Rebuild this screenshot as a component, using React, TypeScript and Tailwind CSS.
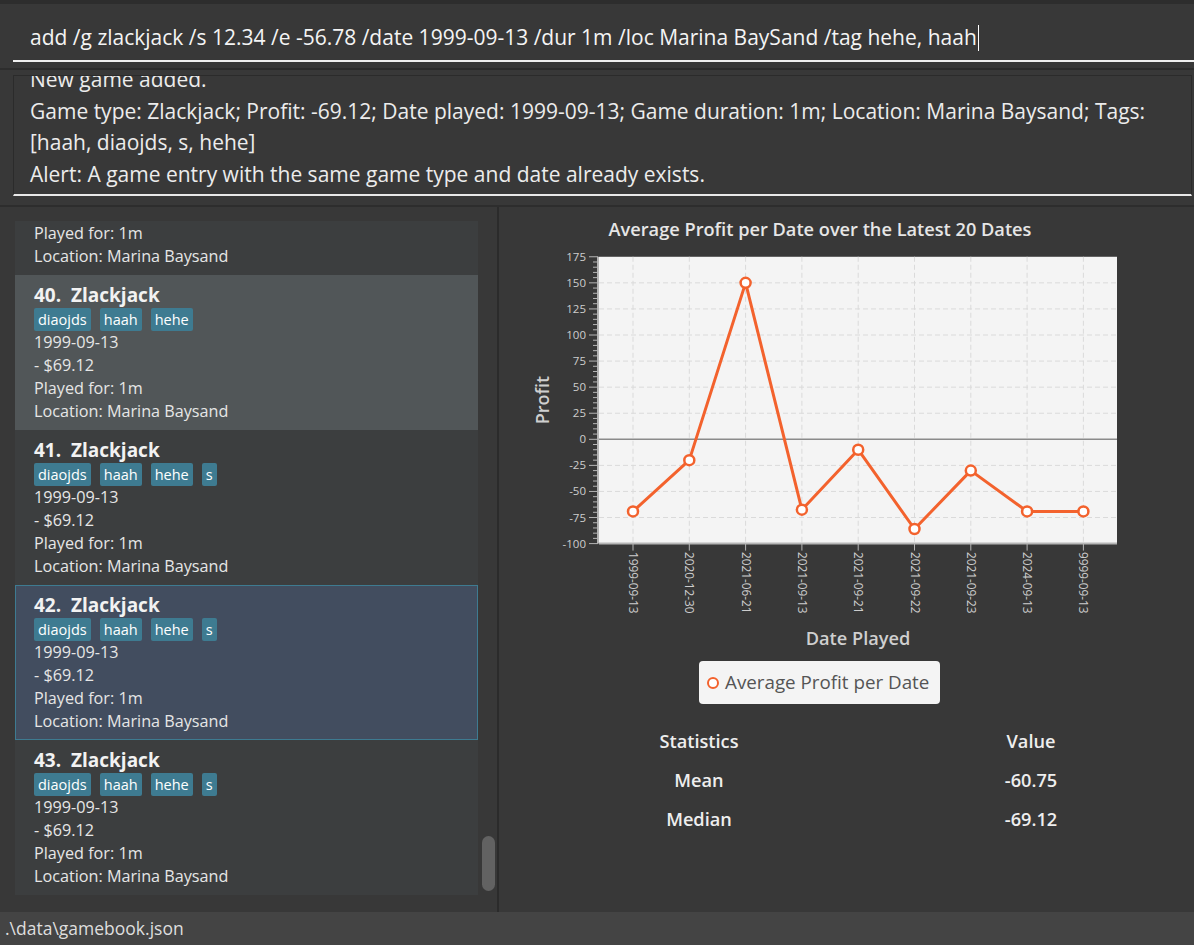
import React from "react";

type Game = {
  id: number;
  tags: string[];
};

const games: Game[] = [
  { id: 39, tags: ["diaojds", "haah", "hehe"] },
  { id: 40, tags: ["diaojds", "haah", "hehe"] },
  { id: 41, tags: ["diaojds", "haah", "hehe", "s"] },
  { id: 42, tags: ["diaojds", "haah", "hehe", "s"] },
  { id: 43, tags: ["diaojds", "haah", "hehe", "s"] },
];

const SELECTED = 42;

const dates = [
  "1999-09-13",
  "2020-12-30",
  "2021-06-21",
  "2021-09-13",
  "2021-09-21",
  "2021-09-22",
  "2021-09-23",
  "2024-09-13",
  "9999-09-13",
];
const profits = [-69.12, -20, 150, -67.5, -10, -86, -30, -69.12, -69.12];

// plot geometry in page coordinates
const PX0 = 599;
const PX1 = 1117;
const ZERO_Y = 437.3;
const UNIT = 1.043;
const yOf = (v: number) => ZERO_Y - v * UNIT;
const xOf = (i: number) => 633 + i * 56.3;

function GameCard({ game }: { game: Game }) {
  const selected = game.id === SELECTED;
  const bg = selected
    ? "bg-[#424d5f] border border-[#3e7b91]"
    : game.id % 2 === 0
      ? "bg-[#515658] border border-transparent"
      : "bg-[#3c3e3f] border border-transparent";
  return (
    <div className={`h-[155px] pt-[7px] pl-[18px] ${bg}`}>
      <div className="h-[24px] leading-[24px] text-[19px] font-bold text-[#f2f2f2] whitespace-pre">
        {`${game.id}.  Zlackjack`}
      </div>
      <div className="mt-[1px] flex h-[23px] gap-[9px]">
        {game.tags.map((t) => (
          <span
            key={t}
            className="rounded-[2px] bg-[#3e7b91] px-[4px] text-[14.5px] leading-[23px] text-white"
          >
            {t}
          </span>
        ))}
      </div>
      <div className="text-[16.2px] leading-[23px] text-[#e6e6e6]">
        <div>1999-09-13</div>
        <div>- $69.12</div>
        <div>Played for: 1m</div>
        <div>Location: Marina Baysand</div>
      </div>
    </div>
  );
}

function ProfitChart() {
  const hLines: number[] = [];
  for (let v = -75; v <= 150; v += 25) if (v !== 0) hLines.push(v);
  const majors: number[] = [];
  for (let v = -100; v <= 175; v += 25) majors.push(v);
  const minors: number[] = [];
  for (let v = -100; v <= 175; v += 5) if (v % 25 !== 0) minors.push(v);
  const pts = profits.map((p, i) => `${xOf(i)},${yOf(p)}`).join(" ");
  const top = yOf(175);
  const bottom = yOf(-100);

  return (
    <svg width={695} height={445} viewBox="499 205 695 445" className="block">
      <text
        x={820}
        y={234}
        textAnchor="middle"
        fontSize={18.2}
        fontWeight={600}
        fill="#e6e6e6"
        fontFamily="Open Sans, sans-serif"
      >
        Average Profit per Date over the Latest 20 Dates
      </text>

      <rect x={PX0} y={top} width={PX1 - PX0} height={bottom - top} fill="#f4f4f4" />

      {hLines.map((v) => (
        <line key={v} x1={PX0} x2={PX1} y1={yOf(v)} y2={yOf(v)} stroke="#dadada" strokeDasharray="5 3" />
      ))}
      {dates.map((d, i) => (
        <line key={d + i} x1={xOf(i)} x2={xOf(i)} y1={top} y2={bottom} stroke="#dadada" strokeDasharray="5 3" />
      ))}
      <line x1={PX0} x2={PX1} y1={ZERO_Y} y2={ZERO_Y} stroke="#8a8a8a" strokeWidth={1.5} />

      {/* y axis */}
      <line x1={598} x2={598} y1={top} y2={bottom} stroke="#b5b5b5" strokeWidth={2} />
      {majors.map((v) => (
        <line key={v} x1={589} x2={598} y1={yOf(v)} y2={yOf(v)} stroke="#b5b5b5" />
      ))}
      {minors.map((v) => (
        <line key={v} x1={593} x2={598} y1={yOf(v)} y2={yOf(v)} stroke="#b5b5b5" />
      ))}
      {majors.map((v) => (
        <text
          key={v}
          x={586}
          y={yOf(v) + 4}
          textAnchor="end"
          fontSize={11.5}
          fill="#cdcdcd"
          fontFamily="Open Sans, sans-serif"
        >
          {v}
        </text>
      ))}

      {/* x axis */}
      <line x1={PX0} x2={PX1} y1={bottom} y2={bottom} stroke="#b5b5b5" strokeWidth={2} />
      {dates.map((d, i) => (
        <line key={i} x1={xOf(i)} x2={xOf(i)} y1={bottom} y2={bottom + 7} stroke="#b5b5b5" />
      ))}
      {dates.map((d, i) => (
        <text
          key={i}
          x={xOf(i)}
          y={550}
          transform={`rotate(90 ${xOf(i)} 550)`}
          dy={4}
          fontSize={11.8}
          fill="#cdcdcd"
          fontFamily="Open Sans, sans-serif"
        >
          {d}
        </text>
      ))}

      <text
        x={543}
        y={398}
        transform="rotate(-90 543 398)"
        textAnchor="middle"
        dy={6}
        fontSize={18}
        fontWeight={600}
        fill="#cfcfcf"
        fontFamily="Open Sans, sans-serif"
      >
        Profit
      </text>
      <text
        x={858}
        y={643}
        textAnchor="middle"
        fontSize={18.2}
        fontWeight={600}
        fill="#cfcfcf"
        fontFamily="Open Sans, sans-serif"
      >
        Date Played
      </text>

      <polyline points={pts} fill="none" stroke="#f3622d" strokeWidth={3} strokeLinejoin="round" />
      {profits.map((p, i) => (
        <circle key={i} cx={xOf(i)} cy={yOf(p)} r={5} fill="#ffffff" stroke="#f3622d" strokeWidth={2.5} />
      ))}
    </svg>
  );
}

export default function App() {
  return (
    <div className="flex h-[945px] w-[1194px] flex-col overflow-hidden bg-[#383838] font-['Open_Sans',sans-serif] text-white">
      {/* command box */}
      <div className="h-[70px] border-t-[4px] border-b-[2px] border-[#2d2d2d] pl-[13px] pt-[11px]">
        <div className="flex h-[47px] items-center border-b-2 border-[#f0f0f0] pl-[17px] text-[21px] text-[#f4f4f4]">
          <span className="whitespace-pre">
            add /g zlackjack /s 12.34 /e -56.78 /date 1999-09-13 /dur 1m /loc Marina BaySand /tag hehe, haah
          </span>
          <span className="ml-[1px] h-[26px] w-[1px] bg-white" />
        </div>
      </div>

      {/* result display */}
      <div className="h-[135px] pl-[13px] pr-[2px] pt-[5px]">
        <div className="h-[121px] overflow-hidden border border-b-2 border-[#2b2b2b] border-b-[#e8e8e8] pl-[16px]">
          <div className="mt-[-12px] text-[21px] leading-[31.5px] text-[#ececec] whitespace-pre">
            <div>New game added.</div>
            <div>
              Game type: Zlackjack; Profit: -69.12; Date played: 1999-09-13; Game duration: 1m; Location: Marina Baysand; Tags:
            </div>
            <div>[haah, diaojds, s, hehe]</div>
            <div>Alert: A game entry with the same game type and date already exists.</div>
          </div>
        </div>
      </div>

      {/* main */}
      <div className="flex h-[707px] border-t-2 border-[#2d2d2d]">
        <div className="flex w-[499px] border-r-2 border-[#2b2b2b] pl-[15px] pt-[14px]">
          <div className="h-[675px] w-[463px] overflow-hidden">
            <div className="mt-[-101px]">
              {games.map((g) => (
                <GameCard key={g.id} game={g} />
              ))}
            </div>
          </div>
          <div className="ml-[4px] w-[13px]">
            <div className="mt-[615px] h-[55px] rounded-full bg-[#626262]" />
          </div>
        </div>

        <div className="flex-1">
          <ProfitChart />
          <div className="mt-[9px] pl-[200px]">
            <div className="flex h-[43px] w-[241px] items-center rounded-[4px] bg-[#f4f4f4] pl-[8px]">
              <span className="h-[12px] w-[12px] shrink-0 rounded-full border-[2.5px] border-[#f3622d] bg-white" />
              <span className="ml-[6px] whitespace-nowrap text-[18.8px] text-[#555555]">Average Profit per Date</span>
            </div>
          </div>
          <div className="mt-[18px] pl-[100px] text-[18.2px] font-semibold text-[#eeeeee]">
            {[
              ["Statistics", "Value"],
              ["Mean", "-60.75"],
              ["Median", "-69.12"],
            ].map(([a, b]) => (
              <div key={a} className="flex h-[39px] items-center">
                <div className="w-[200px] text-center">{a}</div>
                <div className="ml-[132px] w-[200px] text-center">{b}</div>
              </div>
            ))}
          </div>
        </div>
      </div>

      {/* status bar */}
      <div className="flex h-[33px] items-center bg-[#444444] pl-[5px] text-[17.5px] text-[#dedede]">
        .\data\gamebook.json
      </div>
    </div>
  );
}
